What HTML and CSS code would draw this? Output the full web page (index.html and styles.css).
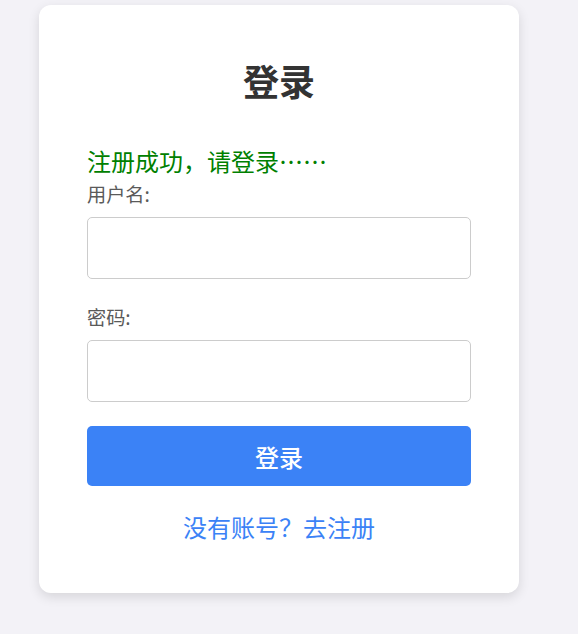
FILE: index.html
```html
<!DOCTYPE html>
<html lang="zh-CN">
<head>
<meta charset="utf-8">
<title>登录</title>
<link rel="stylesheet" href="styles.css">
</head>
<body>
<div class="card">
  <h2 class="title">登录</h2>
  <div class="message">注册成功，请登录……</div>
  <div class="group">
    <label class="label">用户名:</label>
    <input class="input" type="text">
  </div>
  <div class="group">
    <label class="label">密码:</label>
    <input class="input" type="password">
  </div>
  <button class="btn">登录</button>
  <div class="footer"><a class="link" href="#">没有账号？去注册</a></div>
</div>
</body>
</html>
```
FILE: styles.css
```css
html, body {
  margin: 0;
  padding: 0;
}
body {
  background: #f3f2f7;
  font-family: "Noto Sans CJK SC", "Noto Sans", sans-serif;
  min-height: 634px;
  padding-top: 5px;
  box-sizing: border-box;
}
.card {
  margin-left: 39px;
  width: 480px;
  box-sizing: border-box;
  padding: 48px;
  background: #fff;
  border-radius: 12px;
  box-shadow: 0 4px 12px rgba(0, 0, 0, 0.12);
}
.title {
  margin: 0 0 36px;
  font-size: 36px;
  line-height: 54px;
  font-weight: 700;
  text-align: center;
  color: #333;
}
.message {
  font-size: 24px;
  line-height: 36px;
  color: #008000;
  margin-bottom: 1px;
}
.group {
  display: flex;
  flex-direction: column;
  margin-bottom: 24px;
}
.label {
  font-size: 19.2px;
  line-height: 29px;
  color: #5a5a5a;
  margin-bottom: 8px;
}
.input {
  height: 62px;
  box-sizing: border-box;
  border: 1px solid #ccc;
  border-radius: 5px;
  margin: 0;
  padding: 0 12px;
  font-size: 19.2px;
  background: #fff;
}
.btn {
  display: block;
  width: 100%;
  height: 60px;
  border: none;
  border-radius: 5px;
  background: #3b82f6;
  color: #fff;
  font-family: inherit;
  font-size: 24px;
  font-weight: 500;
  margin: 0 0 23px;
  padding: 0;
}
.footer {
  text-align: center;
  font-size: 24px;
  line-height: 36px;
}
.link {
  color: #3b82f6;
  text-decoration: none;
}
```
